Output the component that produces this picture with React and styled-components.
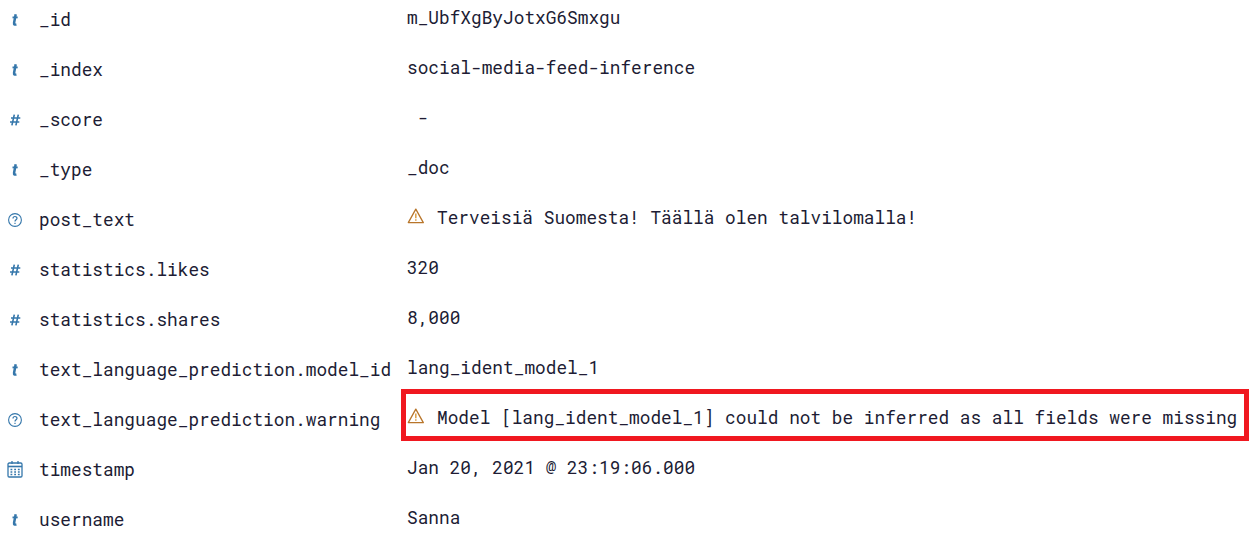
import React from 'react';
import styled, { createGlobalStyle } from 'styled-components';

const GlobalStyle = createGlobalStyle`
  html, body { margin: 0; background: #fff; overflow: hidden; }
`;

const FieldList = styled.main`
  width: 1256px;
  height: 547px;
  margin-top: -6px;
  overflow: hidden;
  color: #201c34;
  font-family: 'Roboto Mono', 'Liberation Mono', monospace;
  font-size: 17.8px;
  line-height: 24px;
  white-space: pre;
`;

const Row = styled.div`
  display: grid;
  grid-template-columns: 39px 368px 1fr;
  height: 50px;
`;

const TypeCell = styled.div`
  display: flex;
  align-items: center;
  justify-content: center;
  width: 30px;
  padding-top: 1px;
`;

const NameCell = styled.div`
  display: flex;
  align-items: center;
`;

const ValueCell = styled.div`
  position: relative;
  display: flex;
  align-items: center;
  padding-bottom: 4px;
  padding-left: ${(p) => (p.$indent ? 10.7 : 0)}px;
`;

const Highlight = styled.span`
  position: absolute;
  box-sizing: border-box;
  inset: -5px 7px 3px -6px;
  border: 5px solid #f01820;
`;

const Icon = styled.svg`
  display: block;
  flex: none;
  fill: none;
  stroke: ${(p) => p.$color || '#3577ab'};
`;

const WarningIcon = styled(Icon)`
  margin: -3px 13px 0 0;
`;

function TypeIcon({ type }) {
  if (type === 'text') {
    return (
      <Icon width="16" height="16" viewBox="0 0 16 16" strokeWidth="2.5">
        <path d="M8.7 2.2 7.1 10.8C6.9 12.4 7.4 12.9 9.4 12.5" />
        <path d="M5.5 5.4h5.2" strokeWidth="1.8" />
      </Icon>
    );
  }
  if (type === 'number') {
    return (
      <Icon width="16" height="16" viewBox="0 0 16 16" strokeWidth="1.6">
        <path d="M7.3 2.6 4.9 13.4M11.3 2.6 8.9 13.4M4 6h9.3M3 10h9.3" />
      </Icon>
    );
  }
  if (type === 'date') {
    return (
      <Icon width="16" height="18" viewBox="0 0 16 18" strokeWidth="1.3">
        <rect x="1" y="2" width="14" height="14" rx="1.2" />
        <path d="M1 5.5h14" strokeWidth="1.6" />
        <path d="M5 0v3M11 0v3" />
        <path d="M3.5 8.5h9.2M3.5 11h9.2M3.5 13.5h9.2" strokeDasharray="1.8 1.9" />
      </Icon>
    );
  }
  return (
    <Icon width="16" height="16" viewBox="0 0 16 16" strokeWidth="1.1">
      <circle cx="8" cy="8" r="6.4" />
      <path d="M6 6.4C6 3.9 10 3.9 10 6.3c0 1.5-2 1.5-2 3.2M8 10.8v1.1" strokeWidth="1.2" />
    </Icon>
  );
}

function Warning() {
  return (
    <WarningIcon $color="#b8752a" width="17" height="16" viewBox="0 0 17 16" strokeWidth="1.3" strokeLinejoin="round">
      <path d="M8.8 1.1 16.3 14.6H1.3Z" />
      <path d="M8.8 5.5v4.8M8.8 11.3v1.5" stroke="#dda24d" strokeWidth="1.6" />
    </WarningIcon>
  );
}

const fields = [
  { type: 'text', name: '_id', value: 'm_UbfXgByJotxG6Smxgu' },
  { type: 'text', name: '_index', value: 'social-media-feed-inference' },
  { type: 'number', name: '_score', value: '-', indent: true },
  { type: 'text', name: '_type', value: '_doc' },
  { type: 'unknown', name: 'post_text', value: 'Terveisiä Suomesta! Täällä olen talvilomalla!', warning: true },
  { type: 'number', name: 'statistics.likes', value: '320' },
  { type: 'number', name: 'statistics.shares', value: '8,000' },
  { type: 'text', name: 'text_language_prediction.model_id', value: 'lang_ident_model_1' },
  {
    type: 'unknown',
    name: 'text_language_prediction.warning',
    value: 'Model [lang_ident_model_1] could not be inferred as all fields were missing',
    warning: true,
    highlighted: true,
  },
  { type: 'date', name: 'timestamp', value: 'Jan 20, 2021 @ 23:19:06.000' },
  { type: 'text', name: 'username', value: 'Sanna' },
];

export default function App() {
  return (
    <>
      <GlobalStyle />
      <FieldList>
        {fields.map((field) => (
          <Row key={field.name}>
            <TypeCell><TypeIcon type={field.type} /></TypeCell>
            <NameCell>{field.name}</NameCell>
            <ValueCell $indent={field.indent}>
              {field.warning && <Warning />}
              {field.value}
              {field.highlighted && <Highlight />}
            </ValueCell>
          </Row>
        ))}
      </FieldList>
    </>
  );
}
